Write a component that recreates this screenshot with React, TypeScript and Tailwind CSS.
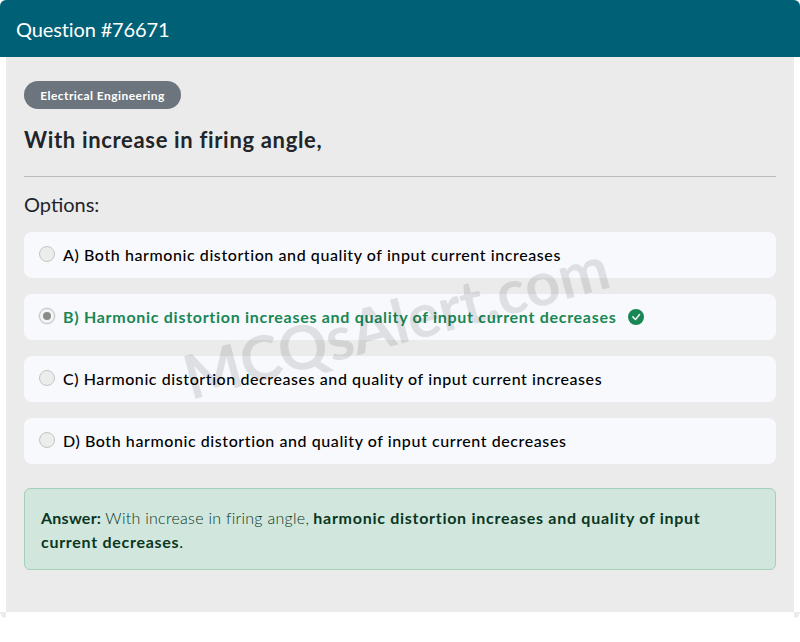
const options = [
  { key: "A", text: "Both harmonic distortion and quality of input current increases" },
  { key: "B", text: "Harmonic distortion increases and quality of input current decreases", correct: true },
  { key: "C", text: "Harmonic distortion decreases and quality of input current increases" },
  { key: "D", text: "Both harmonic distortion and quality of input current decreases" },
];

function CheckBadge() {
  return (
    <svg viewBox="0 0 16 16" className="ml-3 h-4 w-4 shrink-0" fill="#198754">
      <path d="M16 8A8 8 0 1 1 0 8a8 8 0 0 1 16 0zm-3.97-3.03a.75.75 0 0 0-1.08.022L7.477 9.417 5.384 7.323a.75.75 0 0 0-1.06 1.06L6.97 11.03a.75.75 0 0 0 1.079-.02l3.992-4.99a.75.75 0 0 0-.01-1.05z" />
    </svg>
  );
}

export default function App() {
  return (
    <div className="h-[642px] w-[800px] overflow-hidden bg-white font-['Lato',sans-serif]">
      <div className="flex h-[57px] items-center rounded-t-md bg-[#006176] px-4 text-xl tracking-[-0.13px] text-white">
        Question #76671
      </div>
      <div className="relative mx-1.5 h-[555px] bg-[#ebebeb] px-[18px] pt-6">
        <div className="flex h-7 w-[157px] items-center justify-center rounded-full bg-[#6c757d] pt-0.5 text-xs font-bold tracking-[0.44px] text-white">
          Electrical Engineering
        </div>
        <h2 className="mt-[17px] text-[22px] leading-[28px] font-bold tracking-[0.67px] text-[#212529]">
          With increase in firing angle,
        </h2>
        <div className="mt-[22px] border-t border-[#bdbdbd]" />
        <p className="mt-[13px] text-xl leading-[28px] text-[#212529]">Options:</p>
        <div className="mt-[14px] flex flex-col gap-4">
          {options.map((o) => (
            <div key={o.key} className="flex h-[46px] items-center rounded-lg bg-[#f8f9fd] px-[15px]">
              {o.correct ? (
                <span className="mr-2 mb-0.5 flex h-4 w-4 shrink-0 items-center justify-center rounded-full border border-[#c4c4c4] bg-[#f4f4f4] ring-1 ring-black/5">
                  <span className="h-2 w-2 rounded-full bg-[#8a8a8a]" />
                </span>
              ) : (
                <span className="mr-2 mb-0.5 h-4 w-4 shrink-0 rounded-full border border-[#c4c4c4] bg-[#ececec]" />
              )}
              <span className={o.correct ? "text-base font-bold tracking-[0.71px] text-[#198754]" : "text-base font-medium tracking-[0.58px] text-black"}>
                {o.key}) {o.text}
              </span>
              {o.correct && <CheckBadge />}
            </div>
          ))}
        </div>
        <div className="mt-6 rounded-md border border-[#a3cfbb] bg-[#d1e7dd] pt-[17px] pb-[15px] pl-4 text-base leading-6 text-[#0a3622]">
          <b className="tracking-[0.25px]">Answer:</b> <span className="font-light tracking-[0.28px]">With increase in firing angle,</span>{" "}
          <b className="tracking-[0.72px]">harmonic distortion increases and quality of input</b>
          <br />
          <b className="tracking-[0.72px]">current decreases</b>.
        </div>
        <div className="pointer-events-none absolute top-[264px] left-[390px] -translate-x-1/2 -translate-y-1/2 -rotate-[15deg] text-[61px] font-bold whitespace-nowrap text-black/10">
          MCQsAlert.com
        </div>
      </div>
      <div className="flex h-1.5 justify-between">
        <div className="w-1.5 rounded-bl-md bg-[#ebebeb]" />
        <div className="w-1.5 rounded-br-md bg-[#ebebeb]" />
      </div>
    </div>
  );
}
